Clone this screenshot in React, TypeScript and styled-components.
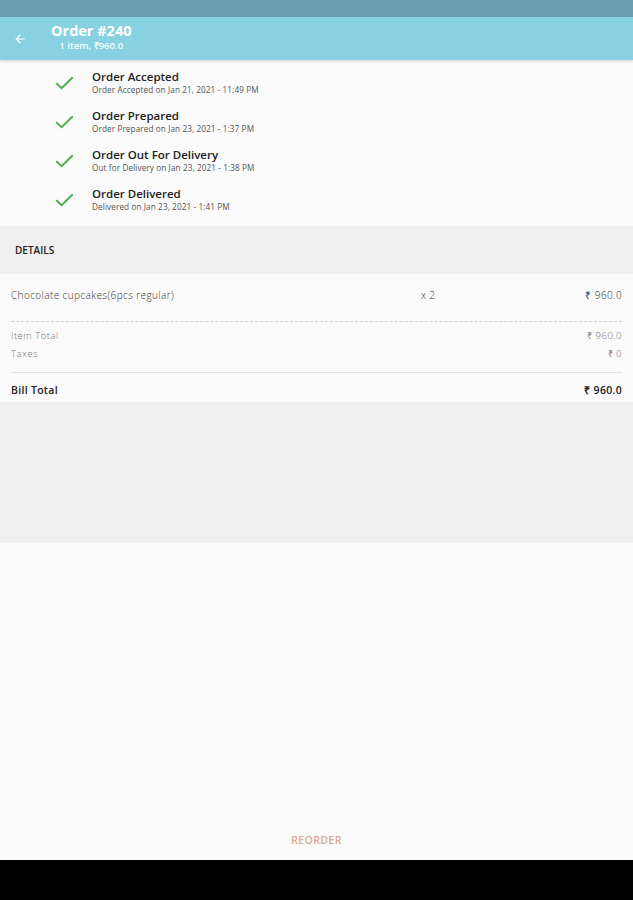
import React from "react";
import styled, { createGlobalStyle } from "styled-components";

const Global = createGlobalStyle`
  html, body { margin: 0; padding: 0; background: #fafafa; }
  body { font-family: "Open Sans", "Liberation Sans", sans-serif; }
`;

const Page = styled.div`
  display: flex;
  flex-direction: column;
  height: 900px;
  width: 633px;
  background: #fafafa;
  overflow: hidden;
`;

const StatusBar = styled.div`
  height: 17px;
  background: #6a9fad;
  flex-shrink: 0;
`;

const AppBar = styled.header`
  height: 43px;
  background: #87d1e3;
  display: flex;
  align-items: center;
  padding-left: 13px;
  gap: 24px;
  flex-shrink: 0;
  box-shadow: 0 1px 3px rgba(0, 0, 0, 0.18);
  position: relative;
  z-index: 1;
`;

const TitleBlock = styled.div`
  display: flex;
  flex-direction: column;
  align-items: center;
  color: #ffffff;
  margin-top: -3px;
`;

const Title = styled.div`
  font-size: 14.5px;
  font-weight: 700;
  line-height: 18px;
`;

const Subtitle = styled.div`
  font-size: 9.6px;
  font-weight: 600;
  line-height: 12px;
  opacity: 0.95;
`;

const Timeline = styled.section`
  padding: 3px 0 7px 55px;
  display: flex;
  flex-direction: column;
  background: #fafafa;
`;

const Step = styled.div`
  height: 39px;
  display: flex;
  align-items: center;
  gap: 18px;
`;

const StepText = styled.div`
  display: flex;
  flex-direction: column;
`;

const StepTitle = styled.div`
  font-size: 11.5px;
  font-weight: 600;
  color: #222;
  line-height: 14px;
`;

const StepSub = styled.div`
  font-size: 8.2px;
  color: #555;
  line-height: 11px;
  letter-spacing: 0.1px;
`;

const Band = styled.div<{ $h: number }>`
  height: ${(p) => p.$h}px;
  background: #efefef;
  display: flex;
  align-items: center;
  padding-left: 15px;
  flex-shrink: 0;
`;

const BandLabel = styled.div`
  font-size: 10px;
  font-weight: 600;
  color: #222;
`;

const Details = styled.section`
  padding: 10px 11px 0;
  display: flex;
  flex-direction: column;
  height: 128px;
  box-sizing: border-box;
  background: #fafafa;
`;

const ItemRow = styled.div`
  display: grid;
  grid-template-columns: 410px 1fr auto;
  align-items: center;
  height: 22px;
  font-size: 10px;
  font-weight: 300;
  letter-spacing: 0.4px;
  color: #333;
`;

const Qty = styled.div`
  text-align: left;
`;

const Right = styled.div`
  text-align: right;
`;

const Dashed = styled.div`
  border-top: 1px dashed #cfcfcf;
  margin: 15px 0 4px;
`;

const Solid = styled.div`
  border-top: 1px solid #e2e2e2;
  margin: 10px 0 8px;
`;

const SumRow = styled.div<{ $bold?: boolean }>`
  display: flex;
  justify-content: space-between;
  align-items: center;
  height: 18px;
  font-size: ${(p) => (p.$bold ? 10.5 : 9.5)}px;
  font-weight: ${(p) => (p.$bold ? 600 : 300)};
  letter-spacing: ${(p) => (p.$bold ? 0.3 : 0.5)}px;
  color: ${(p) => (p.$bold ? "#222" : "#777")};
`;

const Footer = styled.div`
  flex: 1;
  display: flex;
  align-items: flex-end;
  justify-content: center;
  padding-bottom: 13px;
  background: #fafafa;
`;

const Reorder = styled.div`
  font-size: 10.5px;
  font-weight: 600;
  color: #dba797;
  letter-spacing: 0.4px;
`;

const NavBar = styled.div`
  height: 40px;
  background: #000;
  flex-shrink: 0;
`;

const Check = () => (
  <svg width="19" height="14" viewBox="0 0 19 14">
    <path d="M1.2 7.2 L6.6 12.2 L17.8 1.2" fill="none" stroke="#4caf50" strokeWidth="2" />
  </svg>
);

const BackArrow = () => (
  <svg width="14" height="14" viewBox="0 0 24 24">
    <path d="M20 11H7.83l5.59-5.59L12 4l-8 8 8 8 1.41-1.41L7.83 13H20v-2z" fill="#fff" />
  </svg>
);

const steps = [
  ["Order Accepted", "Order Accepted on Jan 21, 2021 - 11:49 PM"],
  ["Order Prepared", "Order Prepared on Jan 23, 2021 - 1:37 PM"],
  ["Order Out For Delivery", "Out for Delivery on Jan 23, 2021 - 1:38 PM"],
  ["Order Delivered", "Delivered on Jan 23, 2021 - 1:41 PM"],
];

export default function App() {
  return (
    <Page>
      <Global />
      <StatusBar />
      <AppBar>
        <BackArrow />
        <TitleBlock>
          <Title>Order #240</Title>
          <Subtitle>1 item, ₹960.0</Subtitle>
        </TitleBlock>
      </AppBar>
      <Timeline>
        {steps.map(([t, s]) => (
          <Step key={t}>
            <Check />
            <StepText>
              <StepTitle>{t}</StepTitle>
              <StepSub>{s}</StepSub>
            </StepText>
          </Step>
        ))}
      </Timeline>
      <Band $h={48}>
        <BandLabel>DETAILS</BandLabel>
      </Band>
      <Details>
        <ItemRow>
          <div>Chocolate cupcakes(6pcs regular)</div>
          <Qty>x 2</Qty>
          <Right>₹ 960.0</Right>
        </ItemRow>
        <Dashed />
        <SumRow>
          <span>Item Total</span>
          <span>₹ 960.0</span>
        </SumRow>
        <SumRow>
          <span>Taxes</span>
          <span>₹ 0</span>
        </SumRow>
        <Solid />
        <SumRow $bold>
          <span>Bill Total</span>
          <span>₹ 960.0</span>
        </SumRow>
      </Details>
      <Band $h={141} />
      <Footer>
        <Reorder>REORDER</Reorder>
      </Footer>
      <NavBar />
    </Page>
  );
}
